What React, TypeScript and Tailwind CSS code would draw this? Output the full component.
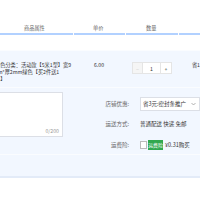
export default function App() {
  return (
    <div className="w-[200px] h-[200px] overflow-hidden bg-white font-['Noto_Sans_CJK_SC',sans-serif] text-[5.2px] leading-[7px] text-[#333]">
      {/* Table header */}
      <div className="h-[33px] flex items-end pb-[2px] text-[#666]">
        <div className="w-[73px] pl-[24px]">商品属性</div>
        <div className="w-[52px] pl-[20px]">单价</div>
        <div className="w-[53px] pl-[21px]">数量</div>
        <div className="flex-1" />
      </div>
      <div className="h-[2px] flex gap-[1px]">
        <div className="w-[73px] bg-[#b2d1ff]" />
        <div className="w-[51px] bg-[#b2d1ff]" />
        <div className="w-[52px] bg-[#b2d1ff]" />
        <div className="flex-1 bg-[#b2d1ff]" />
      </div>
      <div className="h-[15px]" />

      {/* Item block */}
      <div className="h-[126px] bg-[#f2f7ff] border-t border-[#fafcff]">
        <div className="h-[37px] flex border-b border-[#fafcff]">
          <div className="w-[73px] overflow-hidden">
            <div className="ml-[-5px] pt-[10px] whitespace-nowrap">
              <div>颜色分类：活动款【5米1型】宽9</div>
              <div>cm*厚2mm绿色【买2件送1</div>
              <div>卷】</div>
            </div>
          </div>
          <div className="w-[59px] pl-[21px] pt-[10px]">6.00</div>
          <div className="w-[60px] pt-[11px]">
            <div className="flex h-[12px] w-[40px]">
              <div className="w-[11px] border border-[#e5e5e5] bg-[#f5f5f5] text-[#ccc] flex items-center justify-center">−</div>
              <div className="w-[17px] border-y border-[#e5e5e5] bg-white flex items-center justify-center">1</div>
              <div className="w-[12px] border border-[#e5e5e5] bg-white flex items-center justify-center text-[#333]">+</div>
            </div>
          </div>
          <div className="flex-1 pt-[10px] whitespace-nowrap">省1</div>
        </div>

        <div className="flex h-[66px]">
          <div className="w-[100px] pt-[4px]">
            <div className="ml-[-2px] w-[65px] h-[45px] border border-[#dcdfe6] bg-white flex items-end justify-end pr-[3px] pb-[2px] text-[#999]">
              0/200
            </div>
          </div>
          <div className="flex-1 pt-[9px] text-[#666] text-[5.5px]">
            <div className="flex items-center h-[14px]">
              <div className="w-[31px] text-right whitespace-nowrap">店铺优惠:</div>
              <div className="ml-[11px] h-[14px] w-[60px] shrink-0 border border-[#dcdfe6] bg-white flex items-center justify-between pl-[2px] pr-[3px] text-[#333] whitespace-nowrap">
                <span>省3元:密封条推广</span>
                <svg width="5" height="4" viewBox="0 0 10 6" fill="none" stroke="#999" strokeWidth="1.5">
                  <path d="M1 1l4 4 4-4" />
                </svg>
              </div>
            </div>
            <div className="flex items-center h-[14px] mt-[6px]">
              <div className="w-[31px] text-right whitespace-nowrap">运送方式:</div>
              <div className="ml-[11px] text-[#333] whitespace-nowrap">普通配送 快递 免邮</div>
            </div>
            <div className="flex items-center h-[14px] mt-[7px]">
              <div className="w-[31px] text-right whitespace-nowrap">运费险:</div>
              <div className="ml-[11px] flex items-center whitespace-nowrap">
                <div className="w-[7px] h-[8px] border border-[#bbb] bg-white" />
                <div className="ml-[1px] h-[10px] w-[15px] bg-[#31a84f] text-white text-[4.8px] leading-[10px] text-center">运费险</div>
                <div className="ml-[2px] text-[#333]">¥0.31购买</div>
              </div>
            </div>
          </div>
        </div>
        <div className="h-[1px] bg-[#fafcff]" />
      </div>
      <div className="h-[2px] bg-[#e3ebf8]" />
    </div>
  );
}
